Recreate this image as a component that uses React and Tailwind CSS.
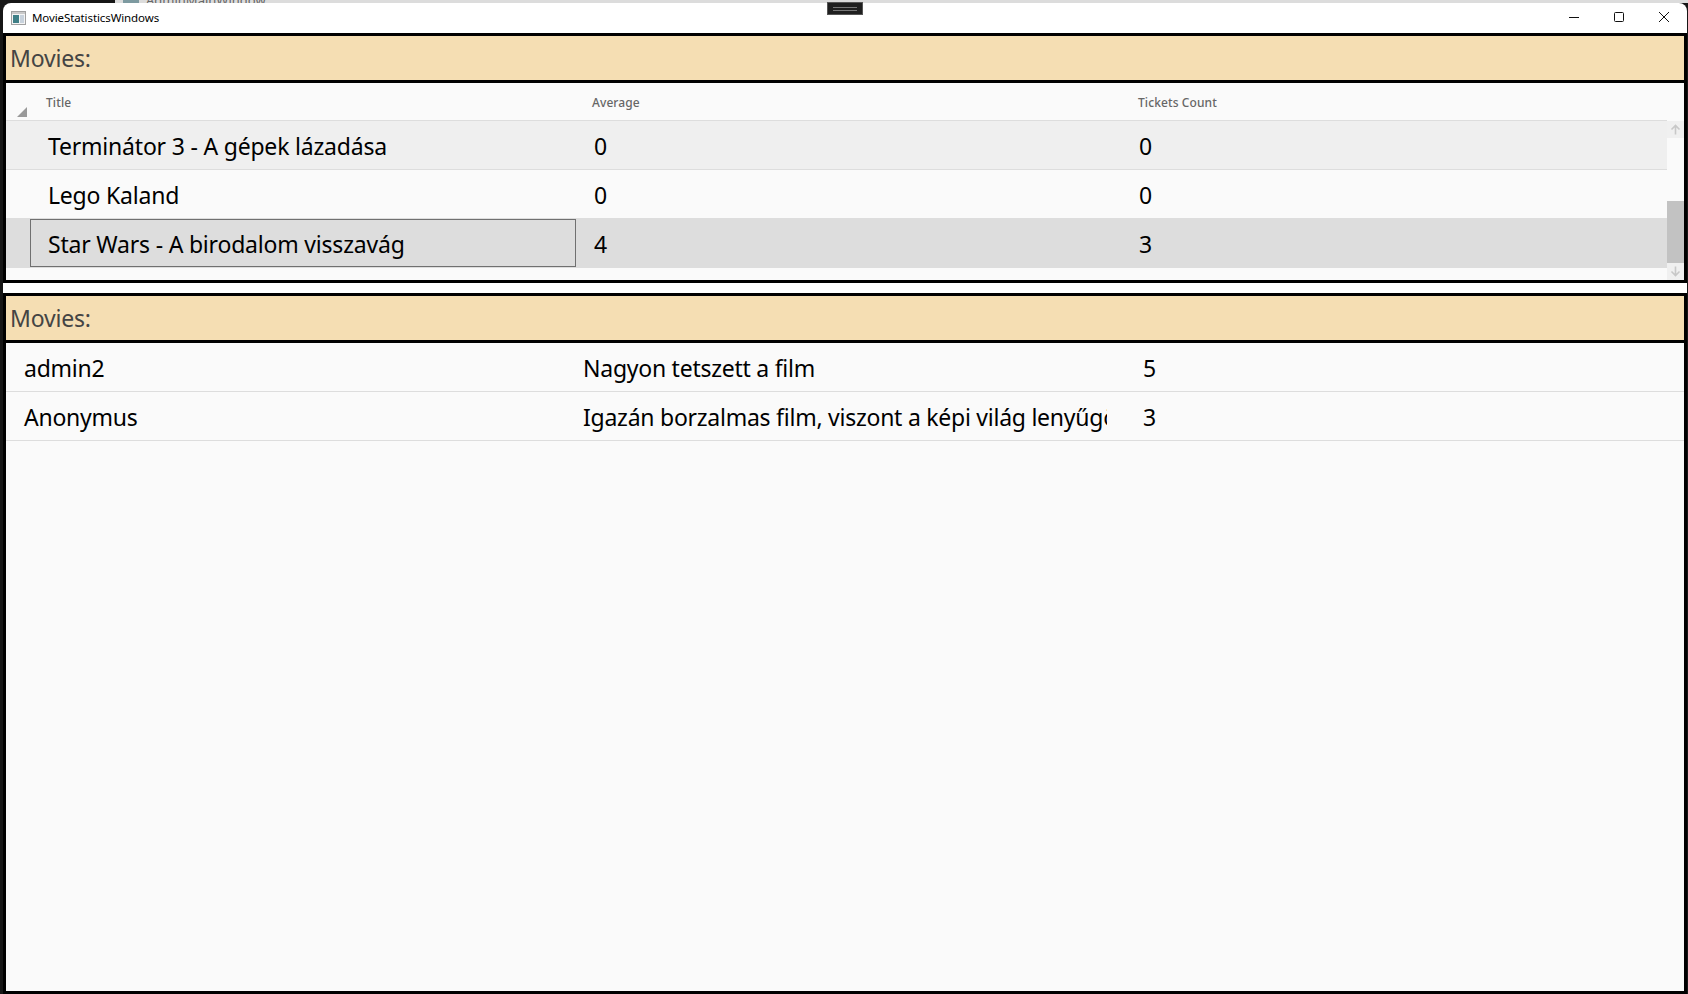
const FONT = "font-['Noto_Sans','Open_Sans',sans-serif]";

const Arrow = ({ down }) => (
  <svg width="11" height="11" viewBox="0 0 11 11" fill="none" stroke="#c8c8c8" strokeWidth="1.6" className={down ? 'rotate-180' : ''}>
    <path d="M5.5 10.5V1.5M1.5 5.5l4-4 4 4" />
  </svg>
);

const Banner = () => (
  <div className="flex h-[50px] shrink-0 items-center border-y-[3px] border-black bg-[#f5deb3] pl-[4px] text-[23px] tracking-[-0.2px] text-[#444]">
    Movies:
  </div>
);

const movies = [
  { title: 'Terminátor 3 - A gépek lázadása', average: '0', tickets: '0', row: 'h-[49px] border-b border-[#ddd] bg-[#efefef]' },
  { title: 'Lego Kaland', average: '0', tickets: '0', row: 'h-[48px] bg-[#fafafa]' },
  { title: 'Star Wars - A birodalom visszavág', average: '4', tickets: '3', row: 'h-[50px] bg-[#ddd]', selected: true },
];

const ratings = [
  { user: 'admin2', text: 'Nagyon tetszett a film', score: '5' },
  { user: 'Anonymus', text: 'Igazán borzalmas film, viszont a képi világ lenyűgöző volt számomra', score: '3' },
];

const App = () => {
  return (
    <div className={`relative flex h-[994px] w-[1688px] flex-col overflow-hidden bg-[#161616] text-black ${FONT}`}>
      {/* window behind */}
      <div className="flex h-[3px] shrink-0 overflow-hidden">
        <div className="w-[115px] bg-[#161616]" />
        <div className="flex flex-1 bg-[#dcdcdc] pl-[8px] text-[13px] leading-[1px] text-[#666]">
          <div className="mr-[7px] h-[3px] w-[16px] bg-[#7d9aa0]" />
          AdminMainWindow
        </div>
      </div>

      <div className="ml-[3px] mr-px flex min-h-0 flex-1 flex-col overflow-hidden rounded-t-lg bg-white">
        {/* title bar */}
        <div className="flex h-[30px] shrink-0 items-center justify-between">
          <div className="flex items-center pl-[8px] text-[11.5px] tracking-[-0.1px]">
            <svg width="15" height="14" viewBox="0 0 15 14" className="mr-[6px]">
              <rect x="0.5" y="0.5" width="14" height="13" fill="#f4f4f4" stroke="#a0a0a0" />
              <rect x="1" y="1" width="13" height="2" fill="#c9c9c9" />
              <rect x="2" y="4" width="6" height="8" fill="#3f7f86" />
              <rect x="9" y="4" width="4" height="8" fill="#c8d2dc" />
            </svg>
            MovieStatisticsWindows
          </div>
          <div className="mb-[2px] flex items-center gap-[35px] pr-[18px]">
            <svg width="10" height="10" viewBox="0 0 10 10" stroke="#111" fill="none">
              <path d="M0 5.5H10" />
            </svg>
            <svg width="10" height="10" viewBox="0 0 10 10" stroke="#111" fill="none">
              <rect x="0.5" y="0.5" width="9" height="9" rx="1" />
            </svg>
            <svg width="10" height="10" viewBox="0 0 10 10" stroke="#111" fill="none">
              <path d="M0 0L10 10M10 0L0 10" />
            </svg>
          </div>
        </div>

        {/* movies */}
        <div className="flex h-[250px] shrink-0 flex-col border-x-[3px] border-b-[3px] border-black">
          <Banner />
          <div className="flex min-h-0 flex-1 bg-[#fafafa]">
            <div className="flex-1">
              <div className="relative flex h-[38px] items-center border-b border-[#ddd] pt-[2px] text-[12px] font-medium tracking-[0.1px] text-[#666]">
                <svg width="10" height="10" viewBox="0 0 10 10" className="absolute left-[11px] top-[24px]">
                  <path d="M10 0V10H0Z" fill="#999" />
                </svg>
                <div className="w-[571px] pl-[40px]">Title</div>
                <div className="w-[546px] pl-[15px]">Average</div>
                <div className="pl-[15px]">Tickets Count</div>
              </div>
              {movies.map((m) => (
                <div key={m.title} className={`flex items-center pt-[2px] text-[23px] tracking-[-0.2px] ${m.row}`}>
                  <div className="w-[24px] shrink-0" />
                  {m.selected ? (
                    <div className="-mt-[2px] flex h-[48px] w-[546px] shrink-0 items-center border border-[#707070] pl-[17px] pt-[2px]">
                      {m.title}
                    </div>
                  ) : (
                    <div className="w-[546px] shrink-0 pl-[18px]">{m.title}</div>
                  )}
                  <div className="w-[546px] shrink-0 pl-[18px]">{m.average}</div>
                  <div className="pl-[17px]">{m.tickets}</div>
                </div>
              ))}
            </div>
            <div className="mt-[38px] flex w-[17px] shrink-0 flex-col">
              <div className="flex h-[17px] items-center justify-center bg-[#f0f0f0]">
                <Arrow />
              </div>
              <div className="flex-1 pt-[63px]">
                <div className="h-full bg-[#c2c2c2]" />
              </div>
              <div className="flex h-[17px] items-center justify-center bg-[#f0f0f0]">
                <Arrow down />
              </div>
            </div>
          </div>
        </div>

        <div className="h-[10px] shrink-0 bg-white" />

        {/* ratings */}
        <div className="flex min-h-0 flex-1 flex-col border-x-[3px] border-b-[3px] border-black bg-[#fafafa]">
          <Banner />
          {ratings.map((r) => (
            <div key={r.user} className="flex h-[49px] items-center border-b border-[#ddd] pt-[2px] text-[23px] tracking-[-0.25px]">
              <div className="w-[577px] shrink-0 pl-[18px]">{r.user}</div>
              <div className="w-[524px] shrink-0 overflow-hidden whitespace-nowrap">{r.text}</div>
              <div className="pl-[36px]">{r.score}</div>
            </div>
          ))}
        </div>
      </div>

      {/* snap bar handle */}
      <div className="absolute left-[827px] top-[2px] flex h-[13px] w-[36px] flex-col items-center justify-center gap-[2px] border border-[#555] bg-[#1f1f1f]">
        <div className="h-px w-[24px] bg-[#777]" />
        <div className="h-px w-[24px] bg-[#777]" />
      </div>
    </div>
  );
};

export default App;
